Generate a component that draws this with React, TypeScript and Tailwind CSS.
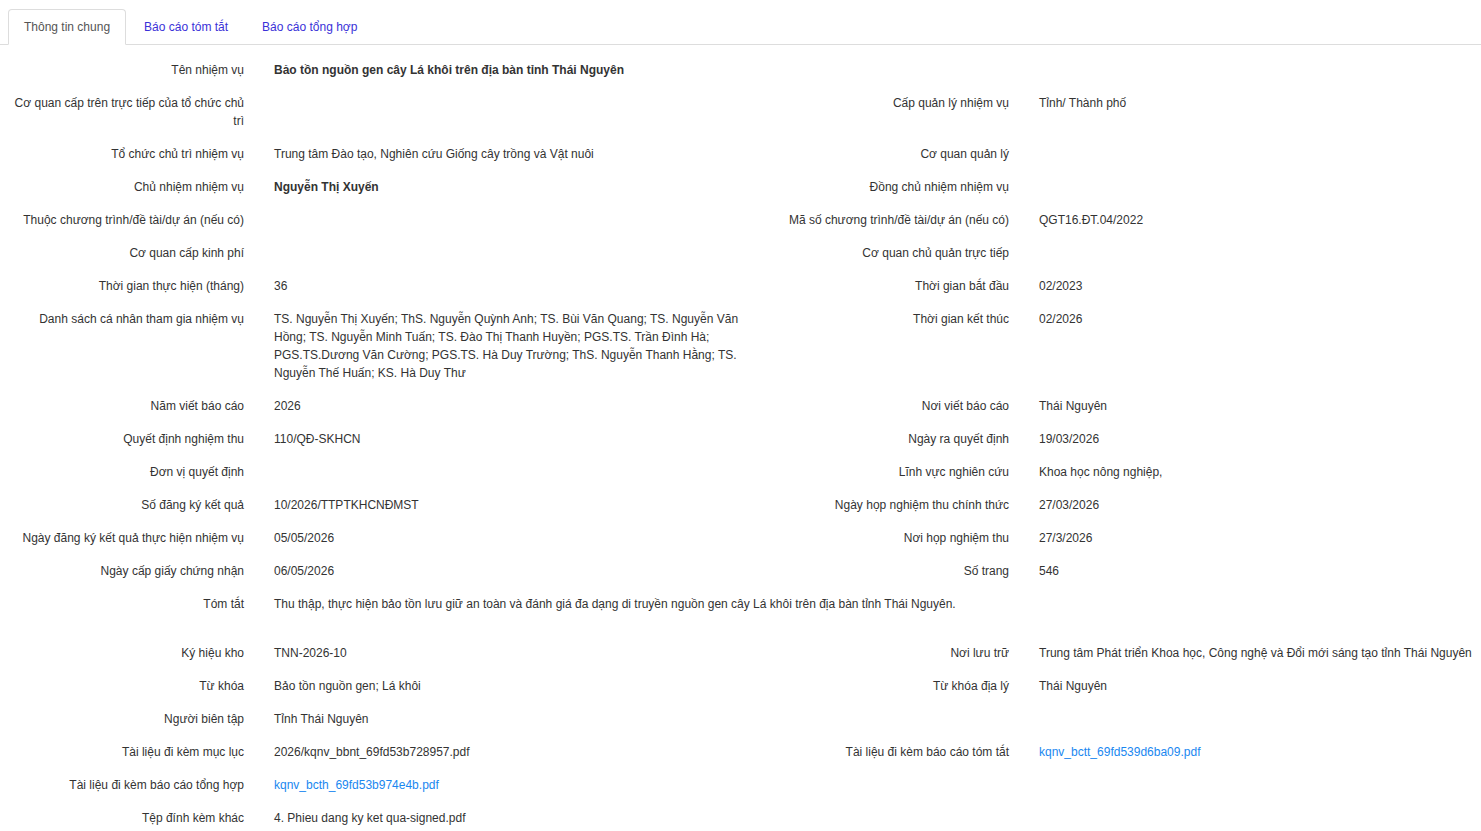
import React, { useState } from 'react';

type Cell = { text: string; bold?: boolean; link?: boolean };
type Row = {
    label: string;
    value?: Cell;
    label2?: string;
    value2?: Cell;
    wide?: boolean;
    extra?: boolean;
};

const rows: Row[] = [
    { label: 'Tên nhiệm vụ', value: { text: 'Bảo tồn nguồn gen cây Lá khôi trên địa bàn tỉnh Thái Nguyên', bold: true }, wide: true },
    { label: 'Cơ quan cấp trên trực tiếp của tổ chức chủ trì', label2: 'Cấp quản lý nhiệm vụ', value2: { text: 'Tỉnh/ Thành phố' } },
    { label: 'Tổ chức chủ trì nhiệm vụ', value: { text: 'Trung tâm Đào tạo, Nghiên cứu Giống cây trồng và Vật nuôi' }, label2: 'Cơ quan quản lý' },
    { label: 'Chủ nhiệm nhiệm vụ', value: { text: 'Nguyễn Thị Xuyến', bold: true }, label2: 'Đồng chủ nhiệm nhiệm vụ' },
    { label: 'Thuộc chương trình/đề tài/dự án (nếu có)', label2: 'Mã số chương trình/đề tài/dự án (nếu có)', value2: { text: 'QGT16.ĐT.04/2022' } },
    { label: 'Cơ quan cấp kinh phí', label2: 'Cơ quan chủ quản trực tiếp' },
    { label: 'Thời gian thực hiện (tháng)', value: { text: '36' }, label2: 'Thời gian bắt đầu', value2: { text: '02/2023' } },
    {
        label: 'Danh sách cá nhân tham gia nhiệm vụ',
        value: {
            text: 'TS. Nguyễn Thị Xuyến; ThS. Nguyễn Quỳnh Anh; TS. Bùi Văn Quang; TS. Nguyễn Văn Hồng; TS. Nguyễn Minh Tuấn; TS. Đào Thị Thanh Huyền; PGS.TS. Trần Đình Hà; PGS.TS.Dương Văn Cường; PGS.TS. Hà Duy Trường; ThS. Nguyễn Thanh Hằng; TS. Nguyễn Thế Huấn; KS. Hà Duy Thư',
        },
        label2: 'Thời gian kết thúc',
        value2: { text: '02/2026' },
    },
    { label: 'Năm viết báo cáo', value: { text: '2026' }, label2: 'Nơi viết báo cáo', value2: { text: 'Thái Nguyên' } },
    { label: 'Quyết định nghiệm thu', value: { text: '110/QĐ-SKHCN' }, label2: 'Ngày ra quyết định', value2: { text: '19/03/2026' } },
    { label: 'Đơn vị quyết định', label2: 'Lĩnh vực nghiên cứu', value2: { text: 'Khoa học nông nghiệp,' } },
    { label: 'Số đăng ký kết quả', value: { text: '10/2026/TTPTKHCNĐMST' }, label2: 'Ngày họp nghiệm thu chính thức', value2: { text: '27/03/2026' } },
    { label: 'Ngày đăng ký kết quả thực hiện nhiệm vụ', value: { text: '05/05/2026' }, label2: 'Nơi họp nghiệm thu', value2: { text: '27/3/2026' } },
    { label: 'Ngày cấp giấy chứng nhận', value: { text: '06/05/2026' }, label2: 'Số trang', value2: { text: '546' } },
    {
        label: 'Tóm tắt',
        value: { text: 'Thu thập, thực hiện bảo tồn lưu giữ an toàn và đánh giá đa dạng di truyền nguồn gen cây Lá khôi trên địa bàn tỉnh Thái Nguyên.' },
        wide: true,
        extra: true,
    },
    { label: 'Ký hiệu kho', value: { text: 'TNN-2026-10' }, label2: 'Nơi lưu trữ', value2: { text: 'Trung tâm Phát triển Khoa học, Công nghệ và Đổi mới sáng tạo tỉnh Thái Nguyên' } },
    { label: 'Từ khóa', value: { text: 'Bảo tồn nguồn gen; Lá khôi' }, label2: 'Từ khóa địa lý', value2: { text: 'Thái Nguyên' } },
    { label: 'Người biên tập', value: { text: 'Tỉnh Thái Nguyên' } },
    { label: 'Tài liệu đi kèm mục lục', value: { text: '2026/kqnv_bbnt_69fd53b728957.pdf' }, label2: 'Tài liệu đi kèm báo cáo tóm tắt', value2: { text: 'kqnv_bctt_69fd539d6ba09.pdf', link: true } },
    { label: 'Tài liệu đi kèm báo cáo tổng hợp', value: { text: 'kqnv_bcth_69fd53b974e4b.pdf', link: true } },
    { label: 'Tệp đính kèm khác', value: { text: '4. Phieu dang ky ket qua-signed.pdf' } },
];

const Value: React.FC<{ cell?: Cell }> = ({ cell }) => {
    if (!cell) return null;
    if (cell.link) {
        return (
            <a href="#" className="text-[#1a87f0] hover:underline">
                {cell.text}
            </a>
        );
    }
    return <span className={cell.bold ? 'font-bold' : ''}>{cell.text}</span>;
};

const tabs = ['Thông tin chung', 'Báo cáo tóm tắt', 'Báo cáo tổng hợp'];

const App: React.FC = () => {
    const [active, setActive] = useState(0);

    return (
        <div className="min-h-screen bg-white text-[12px] leading-[18px] text-[#333]" style={{ fontFamily: '"Liberation Sans", Arial, sans-serif' }}>
            {/* tabs */}
            <ul className="mt-[9px] flex border-b border-[#ddd] pl-[8px]">
                {tabs.map((t, i) => (
                    <li key={t} className="-mb-px mr-[2px]">
                        <button
                            onClick={() => setActive(i)}
                            className={
                                i === active
                                    ? 'h-[36px] rounded-t-[4px] border border-[#ddd] border-b-white bg-white px-[15px] text-[#555]'
                                    : 'h-[36px] rounded-t-[4px] border border-transparent px-[15px] text-[#3a31d8]'
                            }
                        >
                            {t}
                        </button>
                    </li>
                ))}
            </ul>

            {/* details */}
            <div className="pt-[16px]">
                {rows.map((r) => (
                    <div key={r.label} className="mb-[15px] grid grid-cols-[259px_506px_259px_1fr]">
                        <div className="pl-[10px] pr-[15px] text-right">{r.label}</div>
                        {r.wide ? (
                            <div className={`col-span-3 px-[15px] ${r.extra ? 'pb-[16px]' : ''}`}>
                                <Value cell={r.value} />
                            </div>
                        ) : (
                            <>
                                <div className="px-[15px]">
                                    <Value cell={r.value} />
                                </div>
                                <div className="pl-[10px] pr-[15px] text-right">{r.label2}</div>
                                <div className="whitespace-nowrap px-[15px]">
                                    <Value cell={r.value2} />
                                </div>
                            </>
                        )}
                    </div>
                ))}
            </div>
        </div>
    );
};

export default App;
